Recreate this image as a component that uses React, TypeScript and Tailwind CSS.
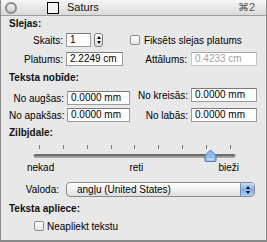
import React from "react";

const field =
  "shrink-0 h-[14px] bg-white border border-[#9b9b9b] border-t-[#7a7a7a] px-[3px] flex items-center text-[10px] leading-none";

const Checkbox = () => (
  <span className="shrink-0 inline-block w-[10px] h-[10px] rounded-[2px] border border-[#8e8e8e] bg-gradient-to-b from-[#ffffff] to-[#e6e6e6]" />
);

const SectionTitle = ({ children, className = "" }: { children: React.ReactNode; className?: string }) => (
  <div className={`h-[12px] leading-[12px] font-bold text-[10px] text-[#111] ${className}`}>{children}</div>
);

const ticks = [6, 30, 54, 78, 101, 125, 149, 173, 197];

const Slider = () => (
  <svg width="204" height="20" viewBox="0 0 204 20" className="block">
    {ticks.map((x) => (
      <line key={x} x1={x + 0.5} y1="2" x2={x + 0.5} y2="6" stroke="#7a7a7a" strokeWidth="1" />
    ))}
    <rect x="0.5" y="11" width="202" height="3.5" rx="1.75" fill="#6b6b6b" />
    <rect x="1" y="13" width="201" height="1.2" fill="#9a9a9a" />
    <path
      d="M177.5 7 L183 12.5 L183 17.5 Q183 18.5 182 18.5 L173 18.5 Q172 18.5 172 17.5 L172 12.5 Z"
      fill="#8fbbea"
      stroke="#4f78a8"
      strokeWidth="1"
    />
    <path d="M174 15 L181 15 L181 17.5 L174 17.5 Z" fill="#b8d6f4" />
  </svg>
);

export default function App() {
  return (
    <div
      className="w-[267px] h-[242px] bg-[#e8e8e8] border-x border-b-2 border-[#8a8a8a] text-black overflow-hidden whitespace-nowrap"
      style={{ fontFamily: '"Liberation Sans", Arial, sans-serif' }}
    >
      {/* title bar */}
      <div className="h-[16px] flex items-center bg-gradient-to-b from-[#f6f6f6] to-[#d9d9d9] border-b border-[#9d9d9d]">
        <span className="ml-[4px] w-[12px] h-[12px] rounded-full border-2 border-[#8c8c8c] bg-gradient-to-b from-[#f2f2f2] to-[#cfcfcf]" />
        <span className="ml-[30px] w-[12px] h-[12px] border border-black bg-[#f4f4f4]" />
        <span className="ml-[8px] text-[11px] leading-none text-[#111]">Saturs</span>
        <span className="ml-auto mr-[11px] text-[11px] leading-none text-[#555]">⌘2</span>
      </div>

      <div className="px-[8px] text-[10px]">
        <SectionTitle className="mt-[2px]">Slejas:</SectionTitle>

        {/* Skaits */}
        <div className="mt-[3px] flex items-center h-[14px]">
          <div className="shrink-0 w-[54px] text-right">Skaits:</div>
          <div className={`${field} ml-[3px] w-[25px]`}>1</div>
          <div className="shrink-0 ml-[3px] w-[9px] h-[14px] rounded-[3px] border border-[#7c7c7c] bg-gradient-to-b from-white to-[#dcdcdc] flex flex-col items-center justify-center gap-[2px]">
            <span className="w-0 h-0 border-x-[2px] border-x-transparent border-b-[3px] border-b-black" />
            <span className="w-0 h-0 border-x-[2px] border-x-transparent border-t-[3px] border-t-black" />
          </div>
          <div className="ml-[27px] flex items-center gap-[4px]">
            <Checkbox />
            <span>Fiksēts slejas platums</span>
          </div>
        </div>

        {/* Platums */}
        <div className="mt-[5px] flex items-center h-[14px]">
          <div className="shrink-0 w-[54px] text-right">Platums:</div>
          <div className={`${field} ml-[3px] w-[57px]`}>2.2249 cm</div>
          <div className="shrink-0 w-[64px] text-right">Attālums:</div>
          <div className={`${field} ml-[4px] w-[66px] border-[#c4c4c4] border-t-[#aaaaaa] text-[#a3a3a3]`}>0.4233 cm</div>
        </div>

        <SectionTitle className="mt-[6px]">Teksta nobīde:</SectionTitle>

        <div className="mt-[5px] flex items-start h-[14px]">
          <div className="shrink-0 w-[55px] text-right mt-[3px] leading-[14px]">No augšas:</div>
          <div className={`${field} ml-[3px] w-[63px] mt-[2px]`}>0.0000 mm</div>
          <div className="shrink-0 w-[58px] text-right leading-[14px]">No kreisās:</div>
          <div className={`${field} ml-[3px] w-[66px] -mt-[1px]`}>0.0000 mm</div>
        </div>

        <div className="mt-[5px] flex items-center h-[14px]">
          <div className="shrink-0 w-[55px] text-right">No apakšas:</div>
          <div className={`${field} ml-[3px] w-[63px]`}>0.0000 mm</div>
          <div className="shrink-0 w-[58px] text-right">No labās:</div>
          <div className={`${field} ml-[3px] w-[66px]`}>0.0000 mm</div>
        </div>

        <SectionTitle className="mt-[5px]">Zilbjdale:</SectionTitle>

        <div className="mt-[4px] ml-[24px]">
          <Slider />
        </div>

        <div className="ml-[18px] w-[212px] flex justify-between h-[12px] leading-[12px] -mt-[1px]">
          <span>nekad</span>
          <span>reti</span>
          <span>bieži</span>
        </div>

        <div className="mt-[8px] flex items-center h-[15px]">
          <div className="shrink-0 w-[50px] text-right">Valoda:</div>
          <div className="shrink-0 ml-[7px] w-[189px] h-[15px] rounded-[4px] border border-[#8a8a8a] bg-gradient-to-b from-white via-[#f2f2f2] to-[#dedede] flex items-center overflow-hidden">
            <span className="pl-[10px] flex-1">angļu (United States)</span>
            <div className="w-[14px] h-full border-l border-[#6f8fb8] bg-gradient-to-b from-[#c9e0f7] via-[#7fb0e6] to-[#a9cdf2] flex flex-col items-center justify-center gap-[2px]">
              <span className="w-0 h-0 border-x-[2px] border-x-transparent border-b-[3px] border-b-black" />
              <span className="w-0 h-0 border-x-[2px] border-x-transparent border-t-[3px] border-t-black" />
            </div>
          </div>
        </div>

        <SectionTitle className="mt-[6px]">Teksta apliece:</SectionTitle>

        <div className="mt-[5px] ml-[25px] flex items-center gap-[3px] h-[12px]">
          <Checkbox />
          <span>Neapliekt tekstu</span>
        </div>
      </div>
    </div>
  );
}
